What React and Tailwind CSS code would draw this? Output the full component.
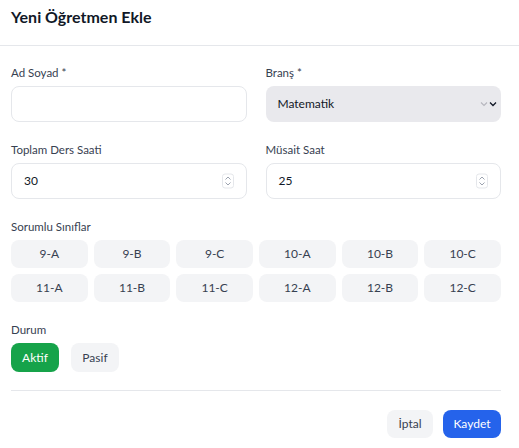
import { useState } from 'react';

const CLASSES = ['9-A', '9-B', '9-C', '10-A', '10-B', '10-C', '11-A', '11-B', '11-C', '12-A', '12-B', '12-C'];

const Label = ({ children }) => (
  <div className="h-4 mb-[5px] text-[11.5px] leading-4 text-[#374151]">{children}</div>
);

const Spinner = () => (
  <div className="absolute right-[12px] top-1/2 -translate-y-1/2 w-[12px] h-[15px] rounded-[3px] border border-[#e5e7eb] flex items-center justify-center">
    <svg width="8" height="11" viewBox="0 0 8 11" fill="none" stroke="#9ca3af" strokeWidth="1">
      <path d="M1.5 4 L4 1.5 L6.5 4" />
      <path d="M1.5 7 L4 9.5 L6.5 7" />
    </svg>
  </div>
);

const NumberField = ({ label, value }) => (
  <div>
    <Label>{label}</Label>
    <div className="relative h-9 rounded-lg border border-[#e5e7eb] bg-white flex items-center px-3 text-[12px] text-[#111827]">
      {value}
      <Spinner />
    </div>
  </div>
);

export default function App() {
  const [active, setActive] = useState(true);

  return (
    <div className="w-[519px] h-[448px] bg-white overflow-hidden" style={{ fontFamily: 'Lato, "Noto Sans", sans-serif' }}>
      <div className="h-[46px] border-b border-[#e5e7eb] flex items-center px-[11px]">
        <h2 className="text-[16px] font-bold text-[#111827] -mt-[12px]">Yeni Öğretmen Ekle</h2>
      </div>

      <div className="pt-[19px] px-[11px] pr-[18px] flex flex-col gap-5">
        <div className="grid grid-cols-2 gap-x-[19px]">
          <div>
            <Label>Ad Soyad *</Label>
            <div className="h-9 rounded-lg border border-[#e5e7eb] bg-white" />
          </div>
          <div>
            <Label>Branş *</Label>
            <div className="h-9 rounded-lg bg-[#e9e9ed] flex items-center justify-between pl-3 pr-[3px] text-[12px] text-[#111827]">
              <span>Matematik</span>
              <svg width="18" height="8" viewBox="0 0 18 8" fill="none" strokeWidth="1.1">
                <path d="M1 2.5 L4 5.5 L7 2.5" stroke="#b6b6bd" />
                <path d="M10 2.5 L13 5.5 L16 2.5" stroke="#111827" strokeWidth="1.3" />
              </svg>
            </div>
          </div>
        </div>

        <div className="grid grid-cols-2 gap-x-[19px]">
          <NumberField label="Toplam Ders Saati" value="30" />
          <NumberField label="Müsait Saat" value="25" />
        </div>

        <div>
          <Label>Sorumlu Sınıflar</Label>
          <div className="grid grid-cols-6 gap-[6px]">
            {CLASSES.map((c) => (
              <button key={c} className="h-7 rounded-lg bg-[#f3f4f6] text-[12px] text-[#374151]">
                {c}
              </button>
            ))}
          </div>
        </div>

        <div>
          <Label>Durum</Label>
          <div className="flex gap-3">
            <button
              onClick={() => setActive(true)}
              className={`w-12 h-[29px] rounded-lg text-[12px] ${active ? 'bg-[#16a34a] text-white' : 'bg-[#f3f4f6] text-[#374151]'}`}
            >
              Aktif
            </button>
            <button
              onClick={() => setActive(false)}
              className={`w-12 h-[29px] rounded-lg text-[12px] ${!active ? 'bg-[#16a34a] text-white' : 'bg-[#f3f4f6] text-[#374151]'}`}
            >
              Pasif
            </button>
          </div>
        </div>
      </div>

      <div className="mx-[11px] mr-[18px] mt-[18px] border-t border-[#e5e7eb] pt-[19px] flex justify-end gap-[10px]">
        <button className="w-[46px] h-7 rounded-lg bg-[#f3f4f6] text-[12px] text-[#374151]">İptal</button>
        <button className="w-[58px] h-7 rounded-lg bg-[#2563eb] text-[12px] text-white">Kaydet</button>
      </div>
    </div>
  );
}
